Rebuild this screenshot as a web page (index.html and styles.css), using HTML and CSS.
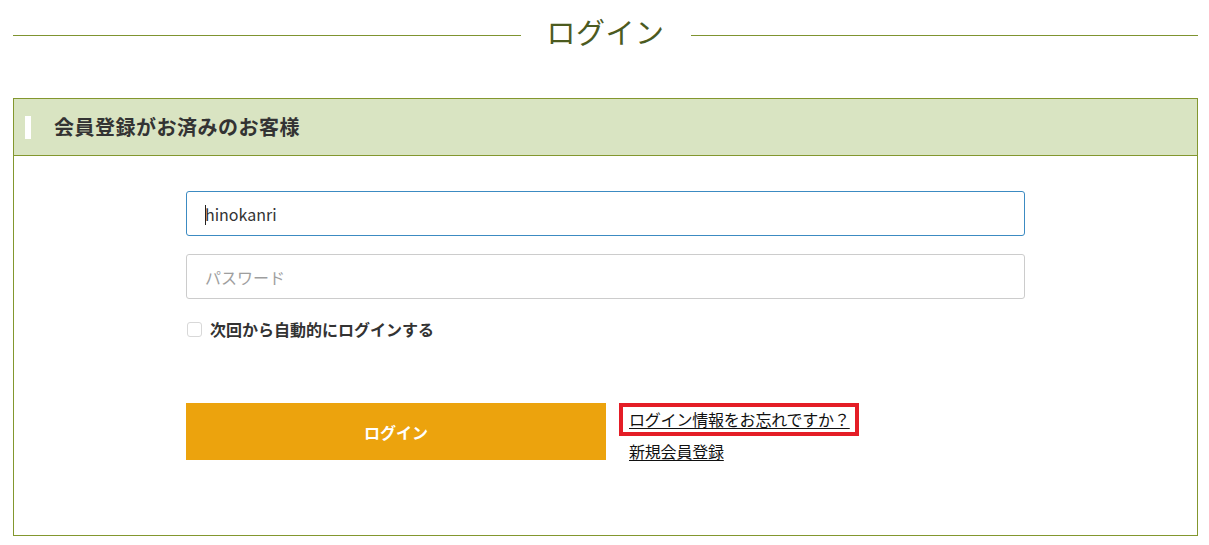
FILE: index.html
```html
<!DOCTYPE html>
<html lang="ja">
<head>
<meta charset="utf-8">
<title>ログイン</title>
<link rel="stylesheet" href="styles.css">
</head>
<body>
<div class="page">
  <div class="page-title">
    <span class="rule"></span>
    <h1 class="title-text">ログイン</h1>
    <span class="rule"></span>
  </div>

  <section class="login-box">
    <div class="box-head">
      <span class="marker"></span>
      <h2 class="box-title">会員登録がお済みのお客様</h2>
    </div>
    <div class="box-body">
      <form class="login-form">
        <div class="field field-active"><span class="caret"></span><span class="value">hinokanri</span></div>
        <div class="field"><span class="placeholder">パスワード</span></div>
        <label class="remember">
          <span class="check"></span>
          <span class="remember-text">次回から自動的にログインする</span>
        </label>
        <div class="actions">
          <button type="button" class="btn-login">ログイン</button>
          <div class="links">
            <span class="highlight"><a href="#" class="link">ログイン情報をお忘れですか？</a></span>
            <a href="#" class="link">新規会員登録</a>
          </div>
        </div>
      </form>
    </div>
  </section>
</div>
</body>
</html>
```

FILE: styles.css
```css
html, body {
  margin: 0;
  padding: 0;
  background: #fff;
}
body {
  font-family: "Noto Sans CJK JP", "Noto Sans", sans-serif;
  color: #333;
}
.page {
  width: 1185px;
  margin-left: 13px;
}
.page-title {
  display: flex;
  align-items: center;
  height: 70px;
  gap: 26px;
}
.rule {
  flex: 1;
  height: 1px;
  background: #7f9430;
}
.title-text {
  margin: 0;
  font-size: 29px;
  font-weight: 400;
  line-height: 40px;
  color: #4c5b1f;
  padding-bottom: 8px;
  letter-spacing: 0.5px;
}
.login-box {
  margin-top: 28px;
  border: 1px solid #83972e;
}
.box-head {
  display: flex;
  align-items: center;
  height: 56px;
  background: #d9e4c2;
  border-bottom: 1px solid #83972e;
  padding-left: 11px;
}
.marker {
  width: 6px;
  height: 23px;
  background: #fff;
  margin-right: 23px;
}
.box-title {
  margin: 0;
  font-size: 20px;
  font-weight: 700;
  line-height: 26px;
  letter-spacing: 0.5px;
  color: #333;
}
.box-body {
  padding: 35px 0 71px;
}
.login-form {
  width: 839px;
  margin: 0 auto;
}
.field {
  box-sizing: border-box;
  height: 45px;
  border: 1px solid #ccc;
  border-radius: 3px;
  display: flex;
  align-items: center;
  padding-left: 18px;
  font-size: 16px;
  margin-bottom: 18px;
}
.field-active {
  border-color: #3c8bc2;
}
.caret {
  width: 1px;
  height: 20px;
  background: #222;
  margin-right: -1px;
  margin-top: 2px;
}
.value {
  color: #333;
  line-height: 20px;
}
.placeholder {
  color: #9e9e9e;
  line-height: 20px;
}
.remember {
  display: flex;
  align-items: center;
  height: 24px;
  margin-top: 18px;
}
.check {
  box-sizing: border-box;
  width: 15px;
  height: 15px;
  border: 1px solid #d8d8d8;
  border-radius: 3px;
  margin-left: 1px;
  margin-right: 8px;
}
.remember-text {
  font-size: 16px;
  font-weight: 700;
  line-height: 24px;
  color: #333;
}
.actions {
  display: flex;
  align-items: flex-start;
  margin-top: 62px;
}
.btn-login {
  width: 420px;
  height: 57px;
  border: 0;
  background: #eca30d;
  color: #fff;
  font-family: "Noto Sans CJK JP", "Noto Sans", sans-serif;
  font-size: 16px;
  font-weight: 700;
  padding: 0;
}
.links {
  display: flex;
  flex-direction: column;
  align-items: flex-start;
  margin-left: 23px;
}
.highlight {
  display: inline-block;
  border: 4px solid #e41d26;
  padding: 0 5px 0 6px;
  margin-left: -10px;
  line-height: 25px;
}
.link {
  font-size: 16px;
  line-height: 25px;
  letter-spacing: -0.2px;
  color: #111;
  text-decoration: underline;
  text-underline-offset: 2px;
}
.links > .link {
  margin-top: 3px;
}
```
